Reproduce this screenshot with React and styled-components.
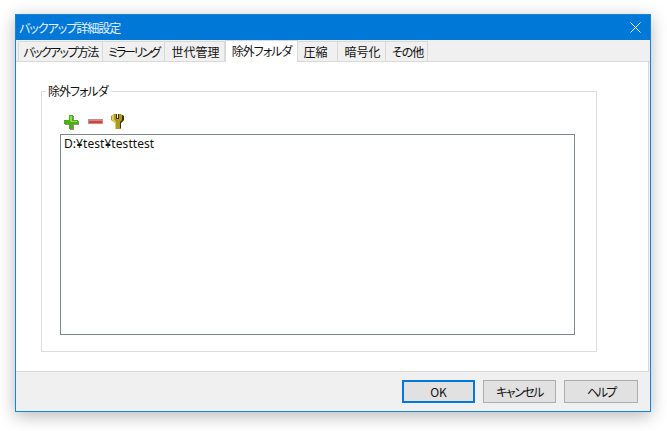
import React from "react";
import styled, { createGlobalStyle } from "styled-components";

const GlobalStyle = createGlobalStyle`
  html, body {
    margin: 0;
    padding: 0;
    width: 667px;
    height: 431px;
    overflow: hidden;
    background: #ffffff;
    font-family: "Noto Sans CJK JP", "Noto Sans", sans-serif;
    font-feature-settings: "palt";
  }
  * { box-sizing: border-box; }
`;

const Page = styled.div`
  width: 667px;
  height: 431px;
  padding: 14px 16px 19px 15px;
  background: #fff;
`;

const Dialog = styled.div`
  width: 636px;
  height: 398px;
  display: flex;
  flex-direction: column;
  background: #f0f0f0;
  border: 1px solid #1484dd;
  box-shadow: 0 4px 16px rgba(0, 0, 0, 0.28);
`;

const TitleBar = styled.div`
  height: 25px;
  flex: none;
  display: flex;
  align-items: center;
  justify-content: space-between;
  padding: 0 9px 0 3px;
  background: #0078d7;
  color: #e8f3fc;
  font-size: 12px;
`;

const TitleText = styled.span`
  letter-spacing: -1px;
`;

const CloseIcon = styled.svg`
  width: 11px;
  height: 11px;
  display: block;
`;

const TabStrip = styled.div`
  height: 22px;
  flex: none;
  display: flex;
  align-items: flex-end;
  padding: 0 0 0 2px;
  border-bottom: 1px solid #d9d9d9;
`;

const Tab = styled.div`
  width: ${props => props.w}px;
  height: ${props => (props.active ? 22 : 20)}px;
  margin-bottom: ${props => (props.active ? -1 : 0)}px;
  display: flex;
  align-items: center;
  justify-content: center;
  padding: 0 ${props => props.pr || 0}px ${props => (props.active ? 3 : 0)}px ${props => props.pl || 0}px;
  font-size: 12px;
  letter-spacing: ${props => props.spacing || 0}px;
  color: #111;
  white-space: nowrap;
  background: ${props => (props.active ? "#fff" : "#f0f0f0")};
  border: 1px solid #d9d9d9;
  border-left-width: ${props => (props.first || props.active ? 1 : 0)}px;
  border-bottom-width: 0;
`;

const Content = styled.div`
  flex: 1;
  margin-right: 1px;
  padding: 22px 51px 19px 25px;
  background: #fff;
  border-right: 1px solid #d9d9d9;
  border-bottom: 1px solid #d9d9d9;
`;

const GroupBox = styled.fieldset`
  margin: 0;
  height: 268px;
  padding: 15px 21px 17px 18px;
  border: 1px solid #dcdcdc;
  min-width: 0;
`;

const GroupLabel = styled.legend`
  margin-left: -15px;
  padding: 0 3px;
  font-size: 12px;
  line-height: 14px;
  letter-spacing: -1px;
  color: #111;
`;

const ToolRow = styled.div`
  height: 21px;
  display: flex;
  align-items: flex-start;
  gap: 6px;
  padding-left: 3px;
`;

const ToolIcon = styled.svg`
  width: 18px;
  height: 18px;
  display: block;
`;

const FolderList = styled.div`
  height: 201px;
  padding: 1px 3px;
  border: 1px solid #82878c;
  background: #fff;
  font-family: "Noto Sans", sans-serif;
  font-size: 12px;
  line-height: 16px;
  letter-spacing: 0.06px;
  color: #111;
`;

const Footer = styled.div`
  flex: 1;
  display: flex;
  justify-content: flex-end;
  align-items: flex-start;
  gap: 8px;
  padding: 8px 12px 0 0;
`;

const Button = styled.div`
  width: ${props => props.w}px;
  height: 23px;
  display: flex;
  align-items: center;
  justify-content: center;
  background: #e1e1e1;
  border: ${props => (props.primary ? "2px solid #0078d7" : "1px solid #adadad")};
  font-size: 12px;
  letter-spacing: ${props => props.spacing || 0}px;
  color: #111;
`;

const tabs = [
  { label: "バックアップ方法", w: 85, first: true, spacing: -1.6 },
  { label: "ミラーリング", w: 62, spacing: -2.1 },
  { label: "世代管理", w: 60, pl: 2 },
  { label: "除外フォルダ", w: 73, active: true, spacing: -1 },
  { label: "圧縮", w: 40, pr: 4 },
  { label: "暗号化", w: 48, pl: 2 },
  { label: "その他", w: 42, spacing: -1, pl: 2 },
];

export default function App() {
  return (
    <>
      <GlobalStyle />
      <Page>
        <Dialog>
          <TitleBar>
            <TitleText>バックアップ詳細設定</TitleText>
            <CloseIcon viewBox="0 0 11 11">
              <path d="M.5.5l10 10M10.5.5l-10 10" stroke="#f2f8fd" strokeWidth="1" fill="none" />
            </CloseIcon>
          </TitleBar>
          <TabStrip>
            {tabs.map(t => (
              <Tab key={t.label} w={t.w} active={t.active} first={t.first} spacing={t.spacing} pl={t.pl} pr={t.pr}>
                {t.label}
              </Tab>
            ))}
          </TabStrip>
          <Content>
            <GroupBox>
              <GroupLabel>除外フォルダ</GroupLabel>
              <ToolRow>
                <ToolIcon viewBox="0 0 18 18">
                  <path d="M7 3h4v5h5v4h-5v5H7v-5H2V8h5z" fill="#444" opacity=".6" />
                  <path d="M6 2h4v5h5v4h-5v5H6v-5H1V7h5z" fill="#4cae12" />
                  <path d="M7 3h2v5h5v1H7.500V8H7z" fill="#8ce04a" />
                </ToolIcon>
                <ToolIcon viewBox="0 0 18 18">
                  <rect x="1" y="6" width="15" height="5" fill="#c08a98" />
                  <rect x="2" y="8" width="13" height="2" fill="#e2401f" />
                </ToolIcon>
                <ToolIcon viewBox="0 0 18 18">
                  <path d="M3 1h2v5h3V1h2l3 2v4l-3 3v5l-1 1H5l-1-1v-5L0 7V3z" fill="#ab9828" />
                  <path d="M2 2h1v5l2 2v6H4v-5L1 7V3z" fill="#e0d060" />
                  <path d="M11 2l2 1v4l-3 3v5l-1 1V9l2-2zM5 1v5h3V1H7v4H6V1z" fill="#3a340a" />
                </ToolIcon>
              </ToolRow>
              <FolderList>D:¥test¥testtest</FolderList>
            </GroupBox>
          </Content>
          <Footer>
            <Button primary w={73}>OK</Button>
            <Button w={73} spacing={-1.5}>キャンセル</Button>
            <Button w={74} spacing={-2}>ヘルプ</Button>
          </Footer>
        </Dialog>
      </Page>
    </>
  );
}
